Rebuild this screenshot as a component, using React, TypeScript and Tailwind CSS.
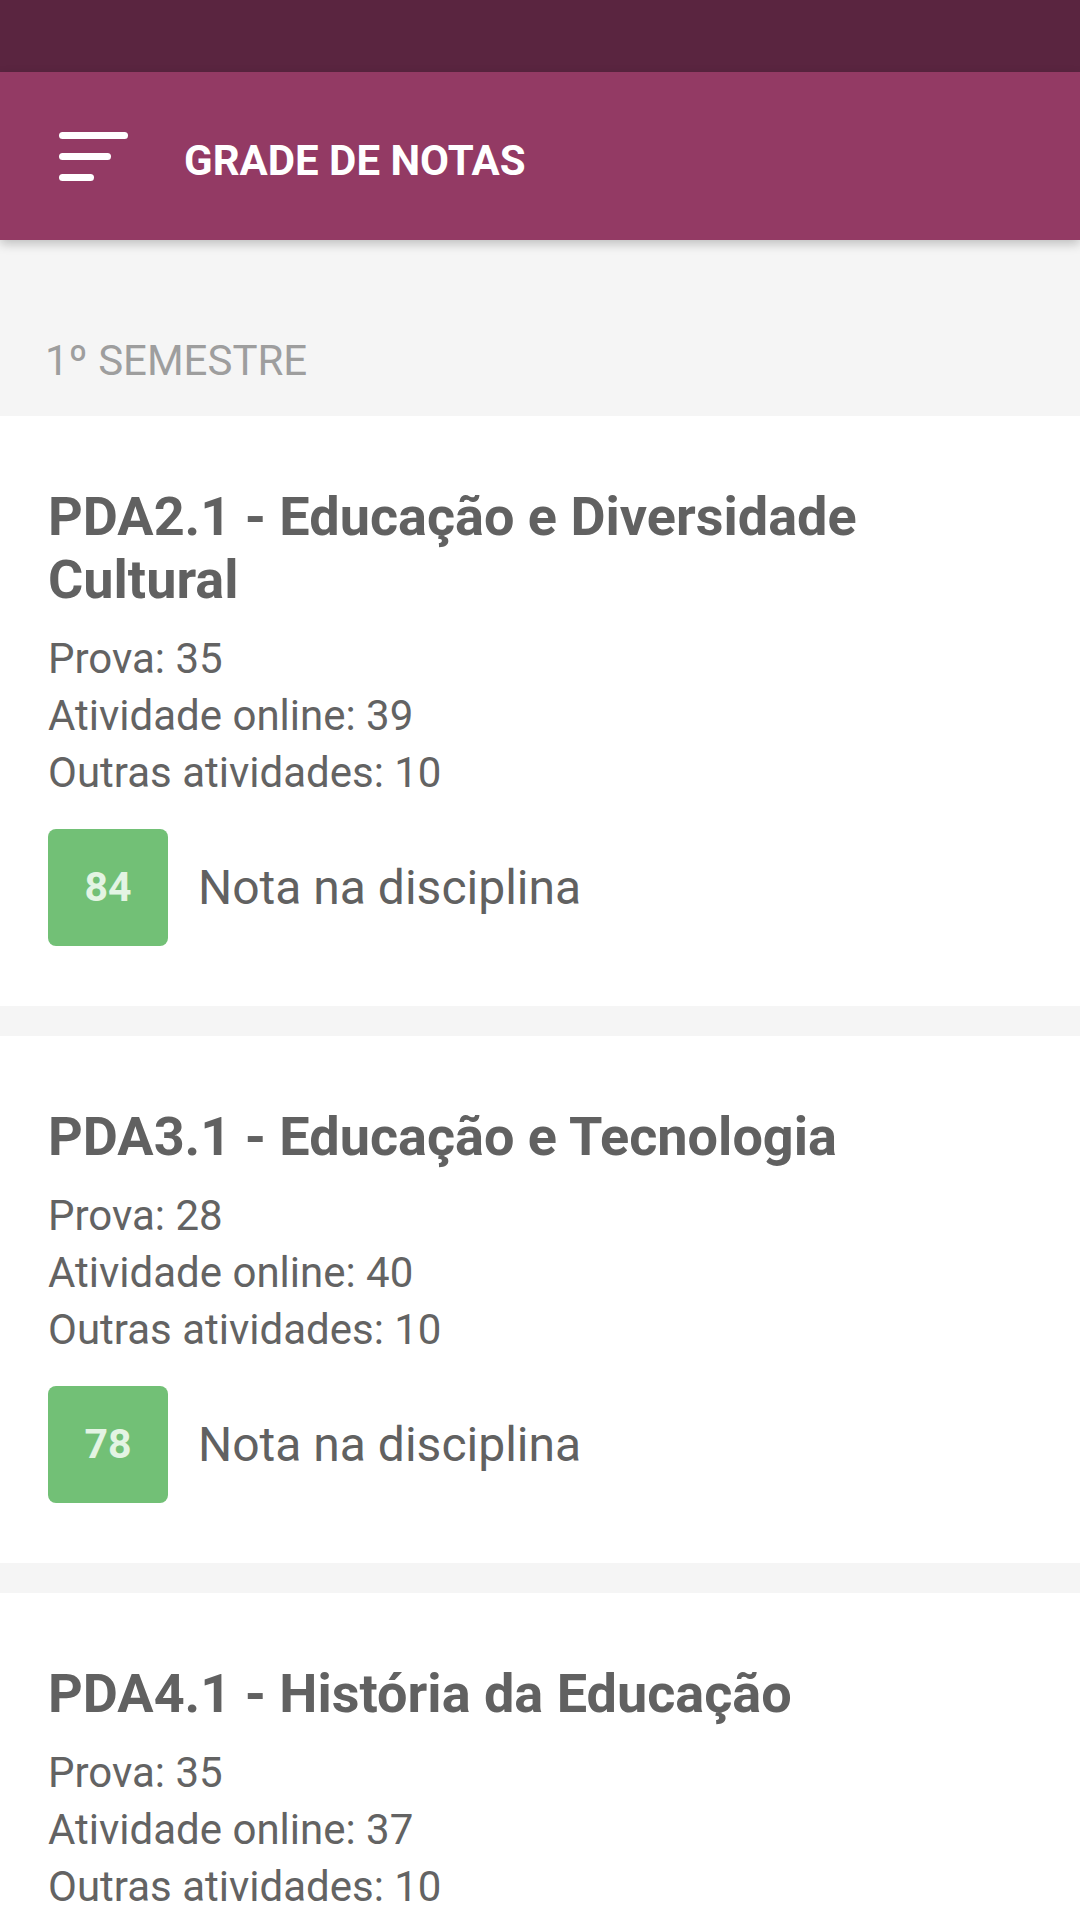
import React from 'react';

type Disciplina = {
  titulo: string;
  prova: number;
  online: number;
  outras: number;
  nota?: number;
};

const DISCIPLINAS: Disciplina[] = [
  { titulo: 'PDA2.1 - Educação e Diversidade Cultural', prova: 35, online: 39, outras: 10, nota: 84 },
  { titulo: 'PDA3.1 - Educação e Tecnologia', prova: 28, online: 40, outras: 10, nota: 78 },
  { titulo: 'PDA4.1 - História da Educação', prova: 35, online: 37, outras: 10, nota: 82 },
];

function MenuIcon() {
  return (
    <div className="flex flex-col gap-[14px] w-[70px]">
      <span className="block h-[7px] w-[69px] rounded-full bg-white" />
      <span className="block h-[7px] w-[52px] rounded-full bg-white" />
      <span className="block h-[7px] w-[35px] rounded-full bg-white" />
    </div>
  );
}

function Card({ d }: { d: Disciplina }) {
  return (
    <div className="bg-white pt-[69px] pb-[60px] pl-[48px] pr-[60px]">
      <h2 className="text-[54px] leading-[63px] font-bold text-[#616161]">{d.titulo}</h2>
      <div className="mt-[19px] text-[42px] leading-[57px] text-[#636363]">
        <p>Prova: {d.prova}</p>
        <p>Atividade online: {d.online}</p>
        <p>Outras atividades: {d.outras}</p>
      </div>
      {d.nota !== undefined && (
        <div className="mt-[28px] flex items-center gap-[30px]">
          <div className="w-[120px] h-[117px] rounded-[8px] bg-[#72c076] flex items-center justify-center text-[41px] font-bold text-[#e3f4e3]">
            {d.nota}
          </div>
          <span className="text-[48px] text-[#616161]">Nota na disciplina</span>
        </div>
      )}
    </div>
  );
}

export default function App() {
  return (
    <div className="w-[1080px] h-[1920px] overflow-hidden bg-[#f5f5f5] font-['Roboto',sans-serif]">
      <div className="h-[72px] bg-[#5a2540]" />
      <header className="relative z-10 h-[168px] bg-[#933a64] flex items-center pl-[59px] shadow-[0_4px_10px_rgba(0,0,0,0.22)]">
        <MenuIcon />
        <h1 className="ml-[55px] mt-[8px] text-[42px] font-bold text-white">GRADE DE NOTAS</h1>
      </header>
      <div className="pt-[100px] pb-[34px] pl-[45px]">
        <p className="text-[42px] leading-[42px] text-[#9e9e9e]">1º SEMESTRE</p>
      </div>
      <div className="flex flex-col gap-[30px]">
        {DISCIPLINAS.map((d) => (
          <Card key={d.titulo} d={d} />
        ))}
      </div>
    </div>
  );
}
